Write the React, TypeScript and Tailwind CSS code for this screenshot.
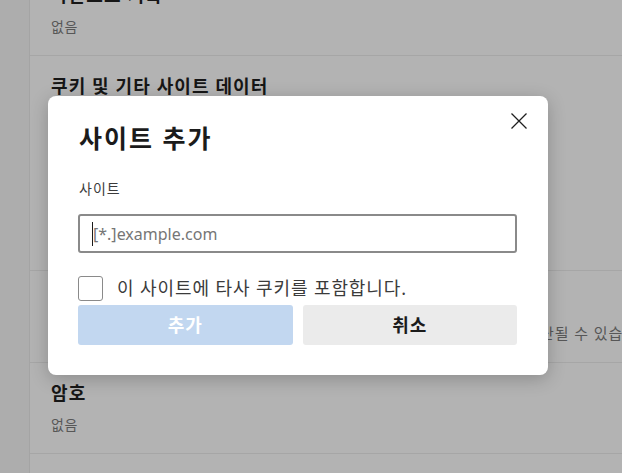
import React from 'react';

const font = "font-['Segoe_UI','Noto_Sans','Noto_Sans_CJK_KR',sans-serif]";

interface Section {
  title: string;
  sub?: string;
  subSize?: string;
  height: string;
}

const sections: Section[] = [
  { title: '다운로드 기록', sub: '없음', height: 'h-[91px]' },
  { title: '쿠키 및 기타 사이트 데이터', height: 'h-[215px]' },
  {
    title: '타사 쿠키',
    sub: '이 사이트에 포함된 다른 사이트의 쿠키는 허용되지 않으며 일부 기능이 차단될 수 있습니다.',
    subSize: 'text-[15px] tracking-[0.9px]',
    height: 'h-[92px]',
  },
  { title: '암호', sub: '없음', height: 'h-[91px]' },
];

const CloseIcon = () => (
  <svg width="18" height="18" viewBox="0 0 18 18" fill="none">
    <path d="M1.5 1.5 L16.5 16.5 M16.5 1.5 L1.5 16.5" stroke="#1f1f1f" strokeWidth="1.3" />
  </svg>
);

const AddSiteDialog: React.FC = () => (
  <div className="absolute left-[48px] top-[96px] w-[500px] h-[279px] bg-white rounded-lg shadow-[0_4px_18px_rgba(0,0,0,0.22)] px-[30px] pt-[26px] pb-[30px] flex flex-col">
    <button className="absolute right-[17px] top-[13px] w-[24px] h-[24px] flex items-center justify-center">
      <CloseIcon />
    </button>

    <h2 className="text-[25px] leading-[32px] font-bold tracking-[2px] text-[#1b1b1b] pl-px">사이트 추가</h2>

    <label className="mt-[25px] text-[14px] leading-[20px] tracking-[1px] text-[#3b3b3b] pl-px">사이트</label>

    <div className="mt-[15px] h-[39px] w-[439px] border-2 border-[#8a8a8a] rounded-[3px] flex items-center pl-[12px]">
      <span className="w-px h-[24px] bg-[#1b1b1b]" />
      <span className="text-[16px] text-[#767676]">[*.]example.com</span>
    </div>

    <div className="mt-[22px] flex items-center h-[26px]">
      <div className="w-[25px] h-[25px] border border-[#8a8a8a] rounded-[3px] bg-white" />
      <span className="ml-[14px] text-[18px] leading-[24px] tracking-[0.9px] text-[#3b3b3b]">
        이 사이트에 타사 쿠키를 포함합니다.
      </span>
    </div>

    <div className="mt-[4px] flex gap-[10px] w-[439px]">
      <button className="flex-1 h-[40px] rounded-[3px] bg-[#c2d7f0] text-white text-[18px] tracking-[1px] font-bold">
        추가
      </button>
      <button className="flex-1 h-[40px] rounded-[3px] bg-[#ebebeb] text-[#1b1b1b] text-[18px] tracking-[1px] font-bold">
        취소
      </button>
    </div>
  </div>
);

export default function App() {
  return (
    <div className={`relative w-[622px] h-[473px] overflow-hidden bg-[#b3b3b3] flex ${font}`}>
      <div className="w-[30px] shrink-0 bg-[#adadad] border-r border-[#a4a4a4]" />
      <div className="flex-1 min-w-0 flex flex-col -mt-[35px]">
        {sections.map((s) => (
          <div key={s.title} className={`${s.height} shrink-0 border-b border-[#a6a6a6] pl-[21px] pt-[18px] overflow-hidden`}>
            <h3 className="text-[18px] leading-[24px] font-bold tracking-[1.1px] text-[#161616] whitespace-nowrap">{s.title}</h3>
            {s.sub && (
              <p className={`mt-[10px] leading-[20px] text-[#575757] whitespace-nowrap ${s.subSize ?? 'text-[14px] tracking-[0.6px]'}`}>
                {s.sub}
              </p>
            )}
          </div>
        ))}
      </div>
      <AddSiteDialog />
    </div>
  );
}
